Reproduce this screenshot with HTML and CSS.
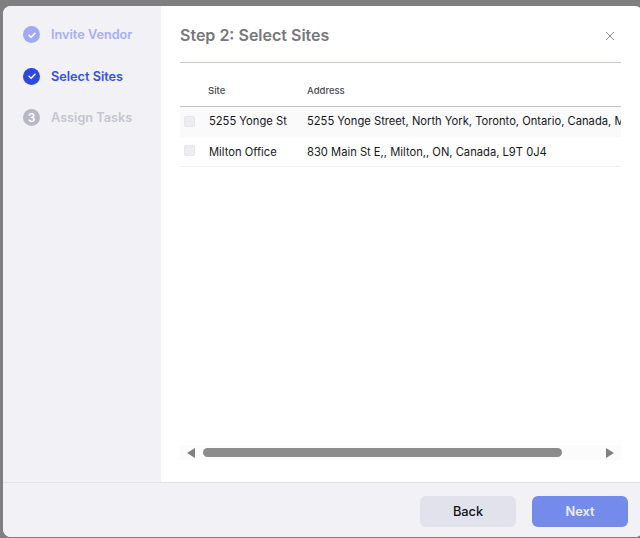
FILE: index.html
```html
<!DOCTYPE html>
<html lang="en">
<head>
<meta charset="utf-8">
<title>Select Sites</title>
<link rel="stylesheet" href="styles.css">
</head>
<body>
<div class="modal">
  <div class="upper">
    <aside class="steps">
      <div class="step done">
        <span class="badge"><svg viewBox="0 0 16 16" width="16" height="16"><path d="M5 8.2l2.1 2L11 6.2" fill="none" stroke="#fff" stroke-width="1.5" stroke-linecap="round" stroke-linejoin="round"/></svg></span>
        <span>Invite Vendor</span>
      </div>
      <div class="step active">
        <span class="badge"><svg viewBox="0 0 16 16" width="16" height="16"><path d="M5 8.2l2.1 2L11 6.2" fill="none" stroke="#fff" stroke-width="1.5" stroke-linecap="round" stroke-linejoin="round"/></svg></span>
        <span>Select Sites</span>
      </div>
      <div class="step todo">
        <span class="badge">3</span>
        <span>Assign Tasks</span>
      </div>
    </aside>
    <main class="content">
      <header class="head">
        <h1>Step 2: Select Sites</h1>
        <svg class="close" viewBox="0 0 10 10" width="10" height="10"><path d="M1 1l8 8M9 1L1 9" stroke="#8a8a8f" stroke-width="1" fill="none"/></svg>
      </header>
      <div class="table">
        <div class="row th"><span class="c0"></span><span class="c1 label">Site</span><span class="c2">Address</span></div>
        <div class="row tr shaded"><span class="c0"><i class="box"></i></span><span class="c1">5255 Yonge St</span><span class="c2">5255 Yonge Street, North York, Toronto, Ontario, Canada, M2N 5P8</span></div>
        <div class="row tr plain"><span class="c0"><i class="box"></i></span><span class="c1">Milton Office</span><span class="c2">830 Main St E,, Milton,, ON, Canada, L9T 0J4</span></div>
      </div>
      <div class="scrollbar">
        <svg class="arrow" viewBox="0 0 8 10" width="8" height="10"><path d="M8 0v10L0 5z" fill="#808080"/></svg>
        <div class="track"><div class="thumb"></div></div>
        <svg class="arrow" viewBox="0 0 8 10" width="8" height="10"><path d="M0 0v10l8-5z" fill="#808080"/></svg>
      </div>
    </main>
  </div>
  <footer class="foot">
    <button class="btn back" type="button">Back</button>
    <button class="btn next" type="button">Next</button>
  </footer>
</div>
</body>
</html>
```
FILE: styles.css
```css
* { box-sizing: border-box; }
html, body { margin: 0; height: 100%; }
body {
  width: 640px;
  height: 538px;
  overflow: hidden;
  background: #7f7f7f;
  padding: 6px 0 1px 3px;
  font-family: Inter, "Liberation Sans", sans-serif;
}
.modal {
  width: 640px;
  height: 531px;
  background: #fff;
  border-radius: 8px;
  overflow: hidden;
  display: flex;
  flex-direction: column;
}
.upper { flex: 1; display: flex; min-height: 0; }
.steps {
  width: 158px;
  background: #f1f1f6;
  padding: 20px 0 0 20px;
  display: flex;
  flex-direction: column;
  gap: 24.5px;
}
.step {
  display: flex;
  align-items: center;
  gap: 11px;
  height: 17px;
  font-size: 12.7px;
  font-weight: 600;
  white-space: nowrap;
}
.badge {
  width: 17px;
  height: 17px;
  border-radius: 50%;
  display: flex;
  align-items: center;
  justify-content: center;
  color: #fff;
  font-size: 12px;
  flex: none;
}
.done { color: #a7b0f5; }
.done .badge { background: #a0a9f3; }
.active { color: #3350e6; }
.active .badge { background: #2b48e0; }
.todo { color: #c6c6d0; }
.todo .badge { background: #b8b8c4; }
.content {
  width: 460px;
  padding: 0 0 0 19px;
  display: flex;
  flex-direction: column;
}
.head {
  width: 441px;
  height: 57px;
  border-bottom: 1px solid #c9c9d2;
  display: flex;
  align-items: center;
  justify-content: space-between;
  padding: 1px 6px 0 0;
}
h1 {
  margin: 0;
  font-size: 16px;
  font-weight: 600;
  color: #77777c;
}
.close { margin-top: 2px; }
.table { width: 441px; flex: 1; overflow: hidden; }
.row { display: flex; align-items: center; white-space: nowrap; }
.th {
  height: 44px;
  padding-top: 11px;
  border-bottom: 1px solid #c4c4ce;
  font-size: 9.5px;
  font-weight: 500;
  color: #4a4a55;
}
.tr {
  height: 30px;
  font-size: 11.2px;
  color: #17171b;
  border-bottom: 1px solid #f0f0f3;
}
.shaded { background: #fafafa; border-bottom: 0; padding-bottom: 2px; }
.shaded .c0 { padding-top: 1px; }
.plain .c0 { padding-bottom: 2px; }
.c0 { width: 29px; flex: none; display: flex; padding-left: 4px; }
.c1 { width: 98px; flex: none; }
.c1.label { margin-left: -1px; margin-right: 1px; }
.c2 { flex: none; }
.box {
  width: 11px;
  height: 11px;
  border-radius: 2px;
  background: #ececf1;
  border: 1px solid #e6e6ec;
}
.scrollbar {
  width: 441px;
  height: 15px;
  background: #fbfbfb;
  margin-bottom: 22px;
  display: flex;
  align-items: center;
  padding: 0 7px;
  gap: 8px;
}
.track { flex: 1; height: 9px; }
.thumb { width: 359px; height: 9px; border-radius: 5px; background: #8c8c8c; }
.foot {
  height: 55px;
  background: #f1f1f6;
  border-top: 1px solid #e2e2ea;
  display: flex;
  justify-content: flex-start;
  align-items: flex-start;
  gap: 16px;
  padding: 13px 0 0 417px;
}
.btn {
  width: 96px;
  height: 31px;
  border: 0;
  border-radius: 6px;
  padding: 0 0 1px;
  font-family: inherit;
  font-size: 12.8px;
  font-weight: 600;
}
.back { background: #e2e2ec; color: #111116; font-weight: 500; }
.next { background: #758bec; color: #eef0fd; }
```
